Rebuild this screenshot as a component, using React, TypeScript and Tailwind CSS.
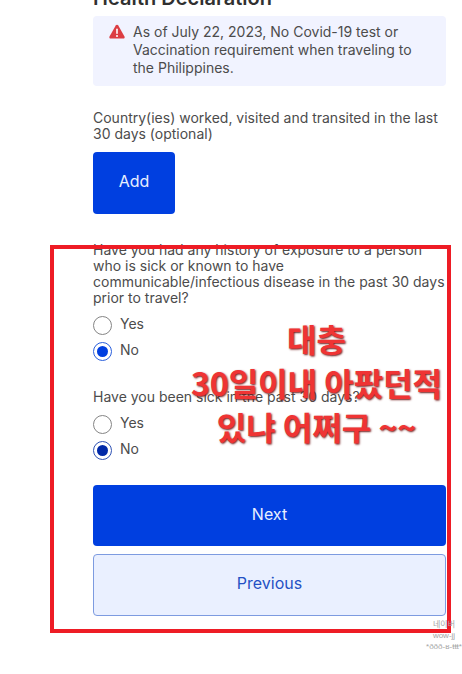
import React from 'react';

const questions = [
  {
    name: 'exposure',
    lines: [
      'Have you had any history of exposure to a person',
      'who is sick or known to have',
      'communicable/infectious disease in the past 30 days',
      'prior to travel?',
    ],
    ring: 'checked:border-[#2a5fdc]',
    dot: 'bg-[#003fe0]',
  },
  {
    name: 'sick',
    lines: ['Have you been sick in the past 30 days?'],
    ring: 'checked:border-[#2f52b4]',
    dot: 'bg-[#0029a8]',
  },
];

const noteLines = ['대충', '30일이내 아팠던적', '있냐 어쩌구 ~~'];

const WarningIcon: React.FC = () => (
  <svg viewBox="0 0 16 16" className="mt-0.5 h-4 w-4 shrink-0" aria-hidden="true">
    <path
      d="M6.7 1.6a1.5 1.5 0 0 1 2.6 0l6.2 10.8c.5 1-.1 2.1-1.2 2.1H1.7c-1.1 0-1.7-1.1-1.2-2.1z"
      fill="#dc3d43"
    />
    <path d="M8 5.3v4" stroke="#fff" strokeWidth="1.6" strokeLinecap="round" />
    <circle cx="8" cy="11.9" r="1" fill="#fff" />
  </svg>
);

type RadioProps = {
  name: string;
  label: string;
  checked?: boolean;
  ring: string;
  dot: string;
};

const Radio: React.FC<RadioProps> = ({ name, label, checked, ring, dot }) => (
  <label className="flex h-[26px] items-center gap-2">
    <span className="grid place-items-center">
      <input
        type="radio"
        name={name}
        value={label}
        defaultChecked={checked}
        className={`peer col-start-1 row-start-1 h-[19px] w-[19px] appearance-none rounded-full border border-[#858585] bg-white ${ring}`}
      />
      <span
        className={`pointer-events-none col-start-1 row-start-1 hidden h-[11px] w-[11px] rounded-full peer-checked:block ${dot}`}
      />
    </span>
    <span className="pb-0.5">{label}</span>
  </label>
);

export default function App() {
  return (
    <main className="overflow-hidden bg-white pb-[58px] pl-[93px] pr-4 font-['Inter','Liberation_Sans',sans-serif] text-sm leading-4 text-[#4c4c4c]">
      {/* Heading is scrolled partly off the top */}
      <header className="flex h-4 items-end overflow-hidden">
        <h1 className="mb-1.5 whitespace-nowrap text-xl font-semibold leading-6 text-[#303030]">
          Health Declaration
        </h1>
      </header>

      <div className="flex gap-2 rounded bg-[#f1f3ff] px-4 pb-2 pt-1.5 leading-[18px]">
        <WarningIcon />
        <p className="py-px">
          As of July 22, 2023, No Covid-19 test or
          <br />
          Vaccination requirement when traveling to
          <br />
          the Philippines.
        </p>
      </div>

      <p className="mt-6 whitespace-nowrap">
        Country(ies) worked, visited and transited in the last
        <br />
        30 days (optional)
      </p>
      <button
        type="button"
        className="mt-2.5 h-[62px] w-[82px] rounded bg-[#003fe0] pb-1 text-base text-[#e8efff]"
      >
        Add
      </button>

      <form className="relative mt-7" onSubmit={(e) => e.preventDefault()}>
        <div className="flex flex-col gap-[25px]">
          {questions.map((q) => (
            <fieldset key={q.name}>
              <legend className="mb-1.5 whitespace-nowrap">
                {q.lines.map((line) => (
                  <span key={line} className="block">
                    {line}
                  </span>
                ))}
              </legend>
              <Radio name={q.name} label="Yes" ring={q.ring} dot={q.dot} />
              <Radio name={q.name} label="No" checked ring={q.ring} dot={q.dot} />
            </fieldset>
          ))}
        </div>

        <div className="mt-[22px] flex flex-col gap-2">
          <button type="submit" className="h-[61px] rounded bg-[#003fe0] pb-1 text-base text-[#e8efff]">
            Next
          </button>
          <button
            type="button"
            className="h-[62px] rounded border border-[#7d9be0] bg-[#eaf0ff] pb-1 text-base text-[#2450c4]"
          >
            Previous
          </button>
        </div>

        {/* Marker frame and note over the form */}
        <div className="pointer-events-none absolute -bottom-[17px] -left-[43px] -right-[5px] top-[3px] border-4 border-[#ee1c25]" />
        <p className="pointer-events-none absolute right-1 top-[74px] whitespace-nowrap text-center font-['Noto_Sans_CJK_KR',sans-serif] text-[32px] font-bold leading-[44px] text-[#ef3434] [text-shadow:1px_1px_2px_#701a1a]">
          {noteLines.map((line) => (
            <span key={line} className="block">
              {line}
            </span>
          ))}
        </p>
        <p className="pointer-events-none absolute -bottom-9 -right-4 w-9 whitespace-nowrap text-center font-['Liberation_Sans','Noto_Sans_CJK_KR',sans-serif] text-[8px] leading-[11px] text-[#a5a5a5]">
          네이버
          <br />
          wow-jj
          <br />
          *ððð-ʁ-ŧŧŧ*
        </p>
      </form>
    </main>
  );
}
